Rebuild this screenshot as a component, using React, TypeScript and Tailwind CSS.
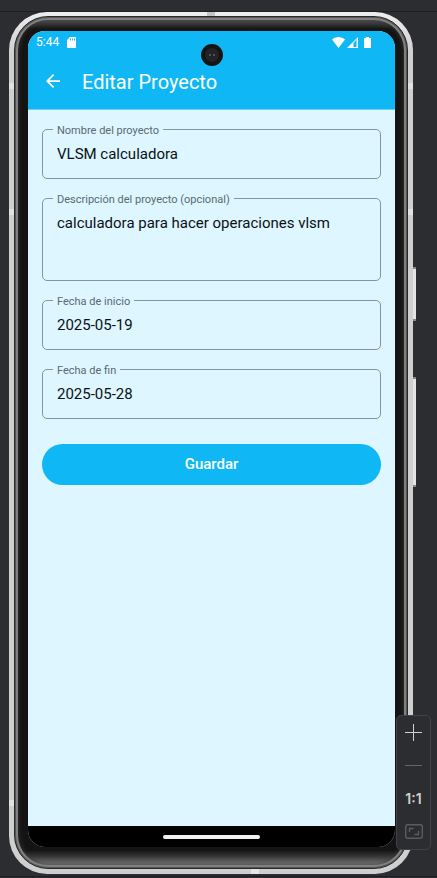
import { useState } from "react";

type FieldProps = {
  id: string;
  label: string;
  value: string;
  onChange: (value: string) => void;
  multiline?: boolean;
};

function OutlinedField({ id, label, value, onChange, multiline }: FieldProps) {
  const box =
    "block w-full resize-none rounded-[5px] border border-[#84959d] bg-transparent px-3.5 text-[15px] leading-5 text-[#0b1114] outline-none";
  return (
    <div className="relative">
      <label
        htmlFor={id}
        className="absolute -top-1.5 left-[11px] bg-[#ddf6ff] px-1 text-[11px] leading-4 text-[#5a6a71]"
      >
        {label}
      </label>
      {multiline ? (
        <textarea
          id={id}
          className={`${box} h-[83px] pt-3.5`}
          value={value}
          onChange={(e) => onChange(e.target.value)}
        />
      ) : (
        <input
          id={id}
          type="text"
          className={`${box} h-[50px]`}
          value={value}
          onChange={(e) => onChange(e.target.value)}
        />
      )}
    </div>
  );
}

function StatusBar() {
  return (
    <div className="flex h-[22px] items-center pr-6 pl-2 text-white">
      <span className="text-xs leading-4">5:44</span>
      <svg className="ml-2 h-[11px] w-[9px]" viewBox="0 0 9 11" fill="currentColor" aria-hidden="true">
        <path
          fillRule="evenodd"
          d="M3 0h5a1 1 0 0 1 1 1v9a1 1 0 0 1-1 1H1a1 1 0 0 1-1-1V3zM3 1.5v2h1v-2zM5 1.5v2h1v-2zM7 1.5v2h1v-2z"
        />
      </svg>
      <svg className="ml-auto h-[11px] w-[13px]" viewBox="0 0 13 11" fill="currentColor" aria-hidden="true">
        <path d="M0 2.6C3.6-.8 9.4-.8 13 2.6L6.500 11z" />
      </svg>
      <svg className="ml-0.5 h-[11px] w-[11px]" viewBox="0 0 11 11" aria-hidden="true">
        <path d="M11 0v11H0z" fill="#fff" />
        <path d="M6 5.500 10 1.800V10H6z" fill="#8adbfa" />
        <path d="M7 6 9 4V10H7z" fill="#0fb7f5" />
      </svg>
      <svg className="ml-1.5 h-[11px] w-[7px]" viewBox="0 0 7 11" fill="currentColor" aria-hidden="true">
        <path d="M2 0h3v1h1.500q.5 0 .5.500v9q0 .5-.5.500h-6q-.5 0-.5-.5v-9Q0 1 .5 1H2z" />
      </svg>
    </div>
  );
}

function AntennaBands() {
  return (
    <>
      <div className="absolute top-0 left-1/2 h-1 w-2 -translate-x-1/2 bg-[#c4c4c4]" />
      <div className="absolute bottom-0 left-3/5 h-[5px] w-2 bg-[#e6e6e6]" />
      <div className="absolute top-[71px] left-0 h-1.5 w-[5px] bg-[#e2e2e2]" />
      <div className="absolute top-[71px] right-0 h-1.5 w-[5px] bg-[#e2e2e2]" />
      <div className="absolute top-[197px] left-0 h-1.5 w-[5px] bg-[#e2e2e2]" />
      <div className="absolute top-[197px] right-0 h-1.5 w-[5px] bg-[#e2e2e2]" />
      <div className="absolute bottom-[68px] left-0 h-1.5 w-[5px] bg-[#e2e2e2]" />
    </>
  );
}

function ZoomControls() {
  const button = "flex h-[33px] w-full items-center justify-center";
  return (
    <div className="absolute right-1.5 bottom-7 flex h-[135px] w-[35px] flex-col items-center rounded-[5px] border border-[#414246] bg-[#2b2d30]">
      <button type="button" aria-label="Acercar" className={button}>
        <svg className="h-[17px] w-[17px]" viewBox="0 0 17 17" stroke="#ced0d6" aria-hidden="true">
          <path d="M0 8.500h17M8.500 0v17" />
        </svg>
      </button>
      <button type="button" aria-label="Alejar" className={button}>
        <svg className="h-[17px] w-[17px]" viewBox="0 0 17 17" stroke="#626469" aria-hidden="true">
          <path d="M0 8.500h17" />
        </svg>
      </button>
      <button type="button" className={`${button} font-[Inter,sans-serif] text-sm font-semibold text-[#ced0d6]`}>
        1:1
      </button>
      <button type="button" aria-label="Ajustar a la ventana" className={button}>
        <svg className="h-[15px] w-[18px]" viewBox="0 0 18 15" fill="none" stroke="#5a5c61" aria-hidden="true">
          <rect x=".7" y=".7" width="16.600" height="13.600" rx="2" strokeWidth="1.400" />
          <path d="M4.500 8V4.500H8.500M13.500 7v3.500H9.500" strokeWidth="1.400" />
        </svg>
      </button>
    </div>
  );
}

export default function App() {
  const [name, setName] = useState("VLSM calculadora");
  const [description, setDescription] = useState("calculadora para hacer operaciones vlsm");
  const [start, setStart] = useState("2025-05-19");
  const [end, setEnd] = useState("2025-05-28");

  return (
    <div className="relative flex min-h-screen flex-col bg-[#2b2d31] font-[Roboto,sans-serif]">
      <div className="h-3 border-b border-[#1e1f22]" />

      <div className="relative mr-6 ml-[9px] flex flex-1 flex-col">
        <div className="absolute top-[255px] -right-[3px] h-[54px] w-1 border-y-2 border-[#85878a] bg-[#e4e4e4]" />
        <div className="absolute top-[365px] -right-[3px] h-[110px] w-1 border-y-2 border-[#85878a] bg-[#e4e4e4]" />

        <div className="relative flex flex-1 flex-col rounded-[38px] bg-[linear-gradient(#eeeeee,#cfcfcf_40px,#cfcfcf)] pt-1 pr-[5px] pb-[5px] pl-[5px]">
          <AntennaBands />
          <div className="flex flex-1 flex-col rounded-[34px] border border-[#292929] bg-[linear-gradient(#7a7a7a,#4a4a4a_4px,#141414_12px,#141414_calc(100%-18px),#333333_calc(100%-12px),#858585_calc(100%-2px))] pt-3.5 pr-3 pb-[21px] pl-[13px] shadow-[inset_0_0_0_1px_#555555,inset_0_0_0_3px_#808080,inset_0_0_5px_3px_#3a3a3a]">
            <div className="relative flex flex-1 flex-col overflow-hidden rounded-[17px] bg-[#ddf6ff]">
              <header className="h-[79px] border-b border-[#69d0f9] bg-[#0fb7f5] text-white">
                <StatusBar />
                <div className="flex h-14 items-center pl-[18px]">
                  <button type="button" aria-label="Volver">
                    <svg className="h-3.5 w-3.5" viewBox="4 4 16 16" fill="currentColor" aria-hidden="true">
                      <path d="M20 11H7.830l5.590-5.590L12 4l-8 8 8 8 1.410-1.410L7.830 13H20v-2z" />
                    </svg>
                  </button>
                  <h1 className="ml-[22px] pt-0.5 text-xl leading-6">Editar Proyecto</h1>
                </div>
              </header>
              <div className="absolute top-[13px] left-1/2 flex h-[22px] w-[22px] -translate-x-1/2 items-center justify-center gap-0.5 rounded-full border-4 border-[#141414] bg-[#242424]">
                <span className="h-0.5 w-0.5 rounded-full bg-[#477175]" />
                <span className="h-0.5 w-0.5 rounded-full bg-[#4d619a]" />
              </div>

              <form
                className="flex flex-1 flex-col gap-[19px] px-3.5 pt-[19px]"
                onSubmit={(e) => e.preventDefault()}
              >
                <OutlinedField id="name" label="Nombre del proyecto" value={name} onChange={setName} />
                <OutlinedField
                  id="description"
                  label="Descripción del proyecto (opcional)"
                  value={description}
                  onChange={setDescription}
                  multiline
                />
                <OutlinedField id="start" label="Fecha de inicio" value={start} onChange={setStart} />
                <OutlinedField id="end" label="Fecha de fin" value={end} onChange={setEnd} />
                <button
                  type="submit"
                  className="mt-1.5 h-[41px] rounded-full bg-[#0fb7f5] text-[15px] font-medium text-white"
                >
                  Guardar
                </button>
              </form>

              <div className="flex h-[21px] items-center justify-center bg-black">
                <div className="h-1 w-[97px] rounded-full bg-[#f1f1f1]" />
              </div>
            </div>
          </div>
        </div>
      </div>

      <div className="h-1 pt-0.5">
        <div className="border-b border-[#1e1f22]" />
      </div>

      <ZoomControls />
    </div>
  );
}
